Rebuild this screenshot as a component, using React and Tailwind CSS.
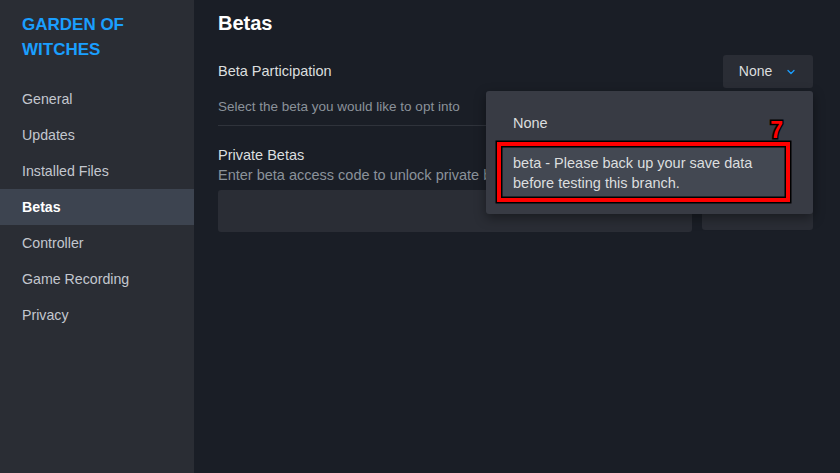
import { ChevronDown } from 'lucide-react';

const navItems = ['General', 'Updates', 'Installed Files', 'Betas', 'Controller', 'Game Recording', 'Privacy'];

function Sidebar() {
  return (
    <div className="w-[194px] shrink-0 bg-[#2a2d34] h-full">
      <h1 className="pl-[22px] pt-[12px] pr-4 text-[17px] leading-[25px] font-bold text-[#1a9fff]">
        GARDEN OF<br />WITCHES
      </h1>
      <nav className="mt-[19px]">
        {navItems.map(item => (
          <div
            key={item}
            className={`h-9 flex items-center pl-[22px] pt-[2px] text-[14.2px] ${
              item === 'Betas' ? 'bg-[#3d4450] text-white font-semibold' : 'text-[#c3c7cf]'
            }`}
          >
            {item}
          </div>
        ))}
      </nav>
    </div>
  );
}

function BetaMenu() {
  return (
    <div className="absolute left-[292px] top-[91px] w-[327px] h-[123px] rounded-[3px] bg-[#383b44] shadow-[0_4px_12px_rgba(0,0,0,0.4)] pt-[11px] px-[11px]">
      <div className="h-[40px] flex items-center pl-[16px] pt-[3px] text-[14.5px] text-[#dcdedf]">None</div>
      <div className="relative w-[293px]">
        <div className="border-[4px] border-[#ff0000] shadow-[0_0_0_1.5px_#000,inset_0_0_0_1.5px_#000] bg-[#434852] pl-[12px] pt-[7px] pb-[5px] text-[14.5px] leading-[20px] text-[#dcdedf]">
          beta - Please back up your save data<br />before testing this branch.
        </div>
        <span className="absolute right-[7px] -top-[29px] text-[23px] font-black text-[#ff0000] [-webkit-text-stroke:3px_#000] [paint-order:stroke_fill]">
          7
        </span>
      </div>
    </div>
  );
}

export default function App() {
  return (
    <div className="w-[840px] h-[473px] flex bg-[#1a1e26] overflow-hidden font-['Liberation_Sans',Arial,sans-serif]">
      <Sidebar />
      <div className="relative flex-1 pl-[24px] pr-[27px]">
        <h2 className="pt-[9px] text-[20px] leading-[28px] font-bold text-white">Betas</h2>

        <div className="mt-[18px] flex items-center justify-between">
          <span className="text-[14.5px] text-[#dcdedf]">Beta Participation</span>
          <button className="w-[90px] h-[33px] rounded-[3px] bg-[#2a2d35] flex items-center justify-center gap-[13px] text-[14px] text-[#dcdedf]">
            None
            <ChevronDown size={12} strokeWidth={2.5} className="text-[#1a9fff]" />
          </button>
        </div>
        <p className="mt-[9px] text-[13.5px] text-[#8b929a]">Select the beta you would like to opt into</p>
        <div className="mt-[8px] h-px bg-[#2f333b]" />

        <div className="mt-[20px] text-[14.5px] leading-[18px] text-[#dcdedf]">Private Betas</div>
        <p className="mt-[1px] text-[14.5px] leading-[20px] text-[#8b929a]">Enter beta access code to unlock private betas.</p>
        <div className="mt-[5px] flex gap-[10px]">
          <div className="flex-1 h-[42px] rounded-[3px] bg-[#2a2d35]" />
          <button className="w-[111px] h-[40px] rounded-[3px] bg-[#2a2d35] pb-[6px] text-[14px] text-[#dcdedf]">Check Code</button>
        </div>

        <BetaMenu />
      </div>
    </div>
  );
}
